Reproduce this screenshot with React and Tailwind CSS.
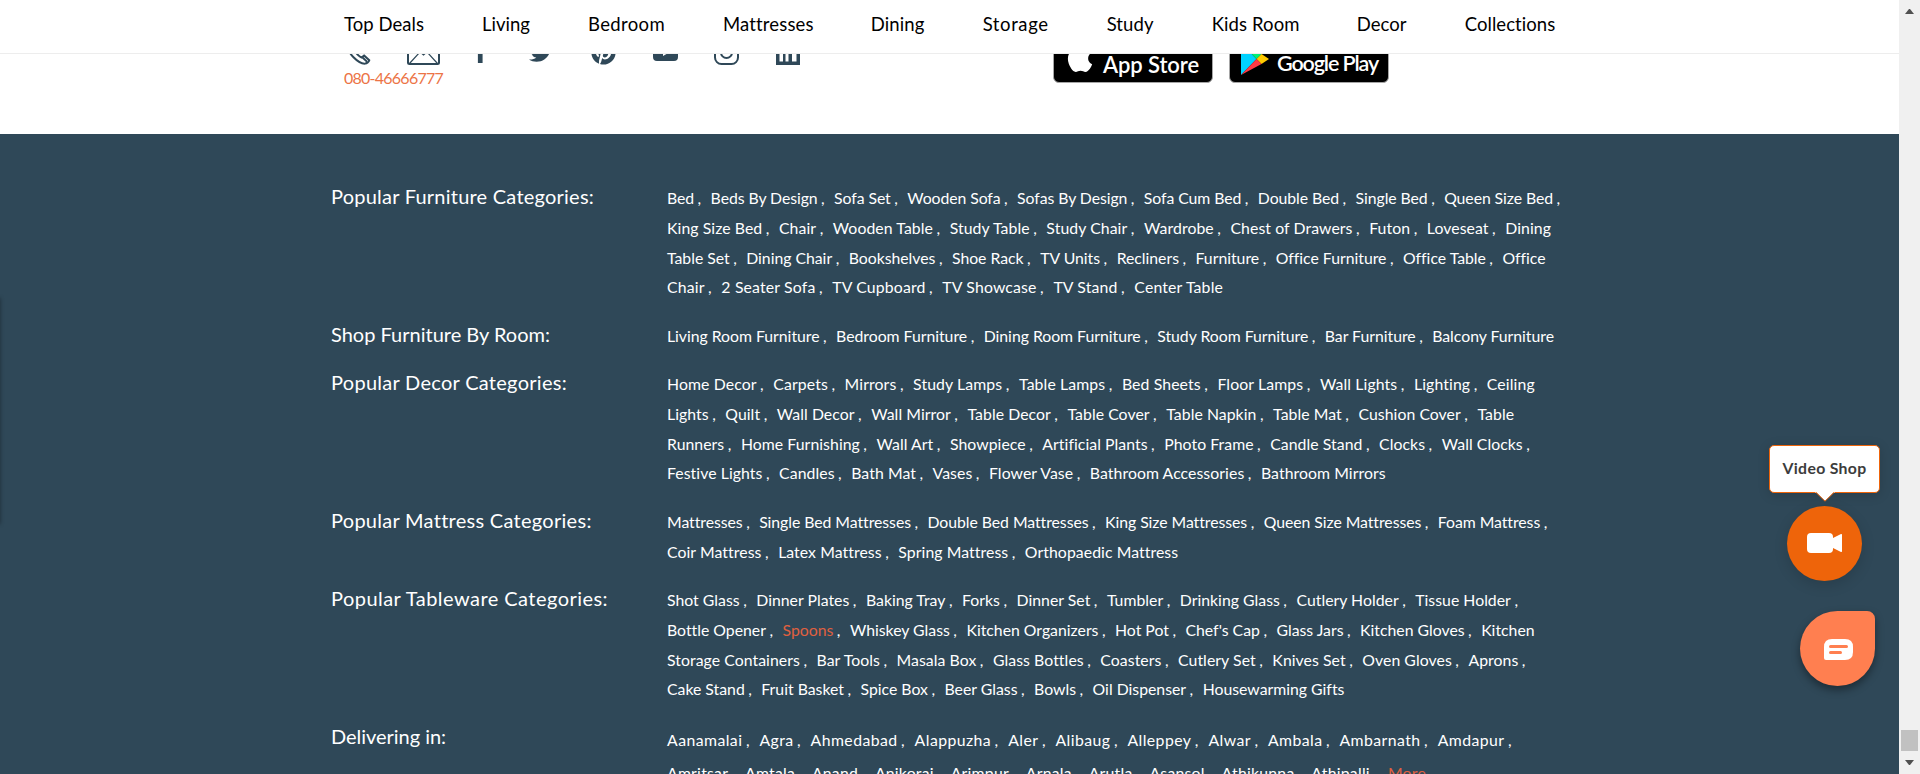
import { useLayoutEffect, useRef } from "react";
import { FaTwitter, FaPinterest, FaFacebookF, FaApple } from "react-icons/fa";

const NAV = [
  ["Top Deals", "ml-[344px]", 80],
  ["Living", "ml-[58px]", 48],
  ["Bedroom", "ml-[58px]", 77],
  ["Mattresses", "ml-[58px]", 90],
  ["Dining", "ml-[57px]", 54],
  ["Storage", "ml-[58px]", 66],
  ["Study", "ml-[58px]", 47],
  ["Kids Room", "ml-[58px]", 88],
  ["Decor", "ml-[57px]", 50],
  ["Collections", "ml-[58px]", 91],
];

const GROUPS = [
  {
    title: "Popular Furniture Categories:",
    width: 263,
    rows: [
      [893, "Bed|Beds By Design|Sofa Set|Wooden Sofa|Sofas By Design|Sofa Cum Bed|Double Bed|Single Bed|Queen Size Bed|"],
      [884, "King Size Bed|Chair|Wooden Table|Study Table|Study Chair|Wardrobe|Chest of Drawers|Futon|Loveseat|Dining"],
      [876, "Table Set|Dining Chair|Bookshelves|Shoe Rack|TV Units|Recliners|Furniture|Office Furniture|Office Table|Office"],
      [556, "Chair|2 Seater Sofa|TV Cupboard|TV Showcase|TV Stand|Center Table"],
    ],
  },
  {
    title: "Shop Furniture By Room:",
    width: 219,
    rows: [[887, "Living Room Furniture|Bedroom Furniture|Dining Room Furniture|Study Room Furniture|Bar Furniture|Balcony Furniture"]],
  },
  {
    title: "Popular Decor Categories:",
    width: 236,
    rows: [
      [868, "Home Decor|Carpets|Mirrors|Study Lamps|Table Lamps|Bed Sheets|Floor Lamps|Wall Lights|Lighting|Ceiling"],
      [847, "Lights|Quilt|Wall Decor|Wall Mirror|Table Decor|Table Cover|Table Napkin|Table Mat|Cushion Cover|Table"],
      [863, "Runners|Home Furnishing|Wall Art|Showpiece|Artificial Plants|Photo Frame|Candle Stand|Clocks|Wall Clocks|"],
      [719, "Festive Lights|Candles|Bath Mat|Vases|Flower Vase|Bathroom Accessories|Bathroom Mirrors"],
    ],
  },
  {
    title: "Popular Mattress Categories:",
    width: 260,
    rows: [
      [877, "Mattresses|Single Bed Mattresses|Double Bed Mattresses|King Size Mattresses|Queen Size Mattresses|Foam Mattress|"],
      [509, "Coir Mattress|Latex Mattress|Spring Mattress|Orthopaedic Mattress"],
    ],
  },
  {
    title: "Popular Tableware Categories:",
    width: 277,
    rows: [
      [851, "Shot Glass|Dinner Plates|Baking Tray|Forks|Dinner Set|Tumbler|Drinking Glass|Cutlery Holder|Tissue Holder|"],
      [867, "Bottle Opener|Spoons|Whiskey Glass|Kitchen Organizers|Hot Pot|Chef's Cap|Glass Jars|Kitchen Gloves|Kitchen"],
      [858, "Storage Containers|Bar Tools|Masala Box|Glass Bottles|Coasters|Cutlery Set|Knives Set|Oven Gloves|Aprons|"],
      [677, "Cake Stand|Fruit Basket|Spice Box|Beer Glass|Bowls|Oil Dispenser|Housewarming Gifts"],
    ],
  },
];

const CITIES = [
  [845, "Aanamalai|Agra|Ahmedabad|Alappuzha|Aler|Alibaug|Alleppey|Alwar|Ambala|Ambarnath|Amdapur|"],
  [759, "Amritsar|Amtala|Anand|Anikorai|Arimpur|Arnala|Arutla|Asansol|Athikunna|Athipalli|More"],
];

// Tracks the text so that it fills the given measure.
function Fit({ width, className = "", children }) {
  const ref = useRef(null);
  useLayoutEffect(() => {
    const el = ref.current;
    const fit = () => {
      el.style.letterSpacing = "0px";
      const natural = el.getBoundingClientRect().width;
      el.style.letterSpacing = `${(width - natural) / el.textContent.length}px`;
    };
    fit();
    document.fonts?.ready.then(fit);
  }, [width]);
  return (
    <span ref={ref} className={`inline-block whitespace-nowrap ${className}`}>
      {children}
    </span>
  );
}

function LinkRow({ width, text, className }) {
  const items = text.split("|");
  return (
    <div className={className}>
      <Fit width={width}>
        {items.map((item, i) => (
          <span key={i}>
            <a className={item === "Spoons" || item === "More" ? "text-[#e0603f]" : ""}>{item}</a>
            {i < items.length - 1 && item !== "Athipalli" && (
              <span className={items[i + 1] === "" ? "ml-[3.5px]" : "ml-[3.5px] mr-[9.5px]"}>,</span>
            )}
            {item === "Athipalli" && <span className="mr-[18px]" />}
          </span>
        ))}
      </Fit>
    </div>
  );
}

function Group({ title, width, children }) {
  return (
    <section className="flex">
      <h3 className="-mt-[1px] w-[336px] shrink-0 text-[20px] leading-[29.7px]">
        <Fit width={width}>{title}</Fit>
      </h3>
      <div className="text-[15.8px]">{children}</div>
    </section>
  );
}

function Header() {
  return (
    <header className="flex h-[54px] shrink-0 border-b border-[#ededed] bg-white text-[18.5px] leading-[48px] text-black">
      {NAV.map(([label, margin, width]) => (
        <a key={label} className={margin}>
          <Fit width={width}>{label}</Fit>
        </a>
      ))}
    </header>
  );
}

function Contacts() {
  return (
    <div className="flex h-[80px] shrink-0 overflow-hidden bg-white text-[#2f4858]">
      <div className="ml-[344px] w-[709px] shrink-0">
        <div className="-mt-[14px] flex h-[25px] items-end">
          <svg className="ml-[3px] mr-[1px] h-[24px] w-[24px]" viewBox="0 0 24 24" fill="none" stroke="currentColor" strokeWidth="2" strokeLinejoin="round">
            <path d="M4 2.2 1.6 5c-.6 3 1.3 7.600 4.900 11.300 3.800 3.900 8.600 6.600 11.700 6.300 1.600-.2 3.800-1.900 4.100-3.300l-5.200-4.900-2.500 2.100c-2.300-.9-5.500-4-6.300-6.400l2.100-2.700z" />
            <path d="m15.300 16.200 4.900 4.700" />
          </svg>
          <svg className="ml-[35px] h-[25px] w-[33px]" viewBox="0 0 33 25" fill="none" stroke="currentColor">
            <rect x="1" y="1" width="31" height="23" rx="1.500" strokeWidth="2" />
            <path d="m2 2 14.500 13L31 2M2.500 23.500l10.500-11.500M30.500 23.500 20 12" strokeWidth="1.200" />
          </svg>
          <FaFacebookF className="mb-[2px] ml-[33px] h-[24px] w-[15px]" />
          <FaTwitter className="mb-[1px] ml-[41px] h-[24px] w-[24px]" />
          <FaPinterest className="ml-[38px] mr-[1px] h-[25px] w-[25px]" />
          <svg className="mb-[4px] ml-[36px] h-[18px] w-[25px]" viewBox="0 0 25 18" fill="currentColor">
            <path fillRule="evenodd" d="M4 0h17q4 0 4 4v10q0 4-4 4H4q-4 0-4-4V4q0-4 4-4Zm6 5v8l7-4z" />
          </svg>
          <svg className="ml-[36px] h-[25px] w-[25px]" viewBox="0 0 25 25" fill="none" stroke="currentColor" strokeWidth="2">
            <rect x="1" y="1" width="23" height="23" rx="6.500" />
            <circle cx="12.500" cy="12.500" r="5.500" />
            <circle cx="19" cy="6" r=".6" />
          </svg>
          <svg className="ml-[37px] h-[25px] w-[24px]" viewBox="0 0 24 25" fill="currentColor">
            <path fillRule="evenodd" d="M0 0h24v25H0zM3.500 9v12.500H7V9zM9.500 9v12.500h3V14q0-2 1.800-2t1.700 2v7.500h4.500V13q0-4-3.500-4-2.500 0-4 1.500V9z" />
          </svg>
        </div>
        <div className="mt-[2px] text-[16px] leading-[22px] text-[#ec7446]">
          <Fit width={99}>080-46666777</Fit>
        </div>
      </div>
      <a className="-mt-[20px] flex h-[49px] w-[160px] rounded-[6px] border border-[#a6a6a6] bg-black text-white">
        <FaApple className="ml-[11px] mt-[6px] h-[33px] w-[30px]" />
        <span className="ml-[8px] mt-[16px] text-[22px] leading-[28px] font-semibold">
          <Fit width={96}>App Store</Fit>
        </span>
      </a>
      <a className="-mt-[20px] ml-[16px] flex h-[49px] w-[160px] rounded-[6px] border border-[#a6a6a6] bg-black text-white">
        <svg className="ml-[11px] mt-[8px] h-[32px] w-[28px]" viewBox="0 0 28 32">
          <path d="M0 0v32l15.500-16z" fill="#00d2ff" />
          <path d="m0 0 20.500 11-5 5z" fill="#00f076" />
          <path d="m20.500 11 7.500 5-7.500 5-5-5z" fill="#ffc900" />
          <path d="m0 32 20.500-11-5-5z" fill="#ff3a44" />
        </svg>
        <span className="ml-[8px] mt-[14px] text-[21.5px] leading-[28px] font-semibold">
          <Fit width={101}>Google Play</Fit>
        </span>
      </a>
    </div>
  );
}

function Footer() {
  return (
    <footer className="relative flex flex-1 flex-col gap-[18.900px] overflow-hidden bg-[#2f4858] pl-[331px] pt-[49.200px] text-white">
      {GROUPS.map((g) => (
        <Group key={g.title} title={g.title} width={g.width}>
          {g.rows.map(([w, text]) => (
            <LinkRow key={text} width={w} text={text} className="h-[29.700px] leading-[29.700px]" />
          ))}
        </Group>
      ))}
      <Group title="Delivering in:" width={115}>
        {CITIES.map(([w, text]) => (
          <LinkRow key={text} width={w} text={text} className="h-[33px] leading-[33px]" />
        ))}
      </Group>
      <div className="absolute left-[-10px] top-[164px] h-[226px] w-[10px] shadow-[0_0_4px_rgba(0,0,0,0.4)]" />
    </footer>
  );
}

function Floating() {
  return (
    <>
      <div className="absolute left-[1769px] top-[445px] h-[48px] w-[111px] rounded-[5px] border border-[#ee640a] bg-white text-center text-[15.800px] leading-[43px] font-bold text-[#3c3c3c] shadow-[0_2px_12px_rgba(0,0,0,0.15)]">
        <Fit width={84}>Video Shop</Fit>
        <svg className="absolute left-[45px] top-[45px] h-[11px] w-[20px]" viewBox="0 0 20 11">
          <path d="M0 0h20v1.500h-1.500L10 10 1.500 1.500H0z" fill="#fff" />
          <path d="m1 1.500 9 8.700 9-8.700" fill="none" stroke="#ee640a" />
        </svg>
      </div>
      <button className="absolute left-[1787px] top-[506px] flex h-[75px] w-[75px] items-center justify-center rounded-full bg-[#ee640a] shadow-[0_4px_14px_rgba(0,0,0,0.15)]">
        <svg className="mb-[1px] h-[20px] w-[35px]" viewBox="0 0 35 20" fill="#fff">
          <rect width="26" height="20" rx="4" />
          <path d="M25 5.500 34 1q1-.3 1 .7v16.600q0 1-1 .7l-9-4.500z" />
        </svg>
      </button>
      <button className="absolute left-[1800px] top-[611px] flex h-[75px] w-[75px] items-center justify-center rounded-[38px] rounded-tr-[8px] bg-[#ff7f50] shadow-[0_4px_8px_rgba(0,0,0,0.4)]">
        <svg className="ml-[2px] mt-[1px] h-[21px] w-[29px]" viewBox="0 0 29 21">
          <path d="M8 0h13q8 0 8 8v5q0 8-8 8H2q-2 0-2-2V8q0-8 8-8Z" fill="#fff" />
          <path d="M6.500 7.500h16M6.500 13.500h10" stroke="#ff7f50" strokeWidth="3" strokeLinecap="round" />
        </svg>
      </button>
    </>
  );
}

function Scrollbar() {
  return (
    <div className="flex h-full w-[21px] shrink-0 flex-col items-center bg-[#f0f0f0]">
      <svg className="mt-[9px] h-[5px] w-[9px]" viewBox="0 0 9 5" fill="#505050">
        <path d="M0 5h9L5 0H4z" />
      </svg>
      <div className="mt-[716px] h-[21px] w-[17px] bg-[#c1c1c1]" />
      <svg className="mt-[9px] h-[5px] w-[9px]" viewBox="0 0 9 5" fill="#505050">
        <path d="M0 0h9L5 5H4z" />
      </svg>
    </div>
  );
}

export default function App() {
  return (
    <div className="relative flex h-[774px] w-[1920px] overflow-hidden font-[Lato,'Open_Sans',sans-serif]">
      <main className="flex w-[1899px] flex-col">
        <Header />
        <Contacts />
        <Footer />
      </main>
      <Scrollbar />
      <Floating />
    </div>
  );
}
